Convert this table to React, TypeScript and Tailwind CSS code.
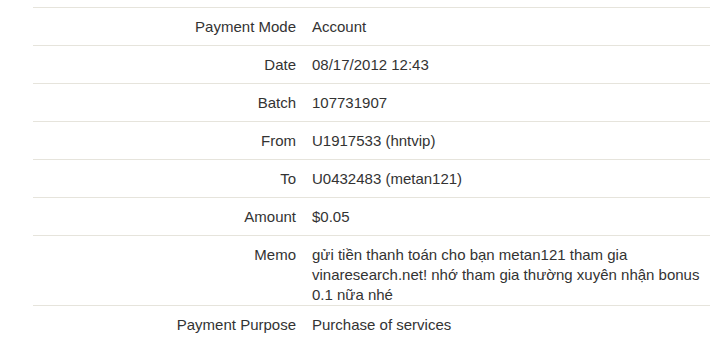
const rows: { label: string; value: string; tall?: boolean }[] = [
  { label: 'Payment Mode', value: 'Account' },
  { label: 'Date', value: '08/17/2012 12:43' },
  { label: 'Batch', value: '107731907' },
  { label: 'From', value: 'U1917533 (hntvip)' },
  { label: 'To', value: 'U0432483 (metan121)' },
  { label: 'Amount', value: '$0.05' },
  {
    label: 'Memo',
    value: 'gửi tiền thanh toán cho bạn metan121 tham gia vinaresearch.net! nhớ tham gia thường xuyên nhận bonus 0.1 nữa nhé',
    tall: true,
  },
  { label: 'Payment Purpose', value: 'Purchase of services' },
];

export default function App() {
  return (
    <div
      className="w-[720px] h-[341px] overflow-hidden bg-white pt-[7px] text-[15px] leading-[20px] text-[#333]"
      style={{ fontFamily: '"Liberation Sans", Arial, sans-serif' }}
    >
      <div className="ml-[33px] w-[677px]">
        {rows.map((row) => (
          <div
            key={row.label}
            className={`flex border-t border-[#e6e4dc] pt-[9px] ${row.tall ? 'pb-0' : 'pb-[8px]'}`}
          >
            <div className="w-[271px] shrink-0 pr-[8px] text-right">{row.label}</div>
            <div className="flex-1 pl-[8px] pr-[4px]">{row.value}</div>
          </div>
        ))}
      </div>
    </div>
  );
}
